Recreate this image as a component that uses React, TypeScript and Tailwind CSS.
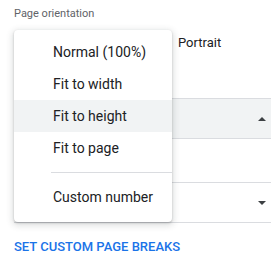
import React from 'react';

const items = ['Normal (100%)', 'Fit to width', 'Fit to height', 'Fit to page'];

function Caret({ up }: { up?: boolean }) {
  return (
    <svg width="8" height="4" viewBox="0 0 8 4" className="text-[#3c4043]">
      <path d={up ? 'M0 4L4 0L8 4Z' : 'M0 0L4 4L8 0Z'} fill="currentColor" />
    </svg>
  );
}

export default function App() {
  return (
    <div
      className="relative w-[271px] h-[268px] bg-white overflow-hidden pl-[14px] pt-[7px]"
      style={{ fontFamily: 'Roboto, "Liberation Sans", sans-serif' }}
    >
      <div className="text-[11px] leading-[14px] text-[#5f6368]">Page orientation</div>

      <div className="h-[24px] mt-[10px] pl-[164px] text-[13px] leading-[24px] text-[#202124]">Portrait</div>

      {/* scale select (open) */}
      <div className="mt-[43px] h-[41px] bg-[#f1f3f4] border-y border-[#dadce0] flex items-center justify-end pr-[5px]">
        <Caret up />
      </div>

      {/* second select */}
      <div className="mt-[43px] h-[41px] bg-white border-y border-[#dadce0] flex items-center justify-end pr-[5px]">
        <Caret />
      </div>

      <div className="mt-[16px] text-[13px] leading-[16px] font-medium text-[#1a73e8]">
        SET CUSTOM PAGE BREAKS
      </div>

      {/* dropdown menu */}
      <div className="absolute left-[14px] top-[30px] w-[158px] bg-white rounded-[4px] pt-[6px] pb-[9px] shadow-[0_2px_6px_2px_rgba(60,64,67,0.15),0_1px_2px_rgba(60,64,67,0.3)]">
        {items.map((label) => (
          <div
            key={label}
            className={`h-[32px] flex items-center pl-[39px] text-[14px] text-[#202124] ${
              label === 'Fit to height' ? 'bg-[#f1f3f4]' : ''
            }`}
          >
            {label}
          </div>
        ))}
        <div className="my-[8px] ml-[37px] h-px bg-[#dadce0]" />
        <div className="h-[32px] flex items-center pl-[39px] text-[14px] text-[#202124]">Custom number</div>
      </div>
    </div>
  );
}
